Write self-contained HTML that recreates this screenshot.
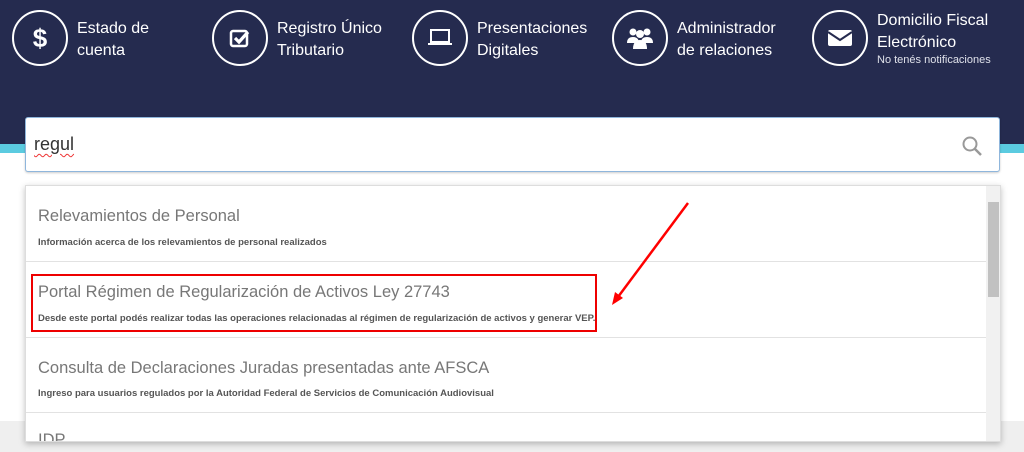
<!DOCTYPE html>
<html><head><meta charset="utf-8"><style>
*{margin:0;padding:0;box-sizing:border-box}
body{width:1024px;height:452px;overflow:hidden;background:#fff;font-family:"Liberation Sans",sans-serif;position:relative}
.hdr{position:absolute;left:0;top:0;width:1024px;height:144px;background:#252b4f}
.cyan{position:absolute;left:0;top:144px;width:1024px;height:9px;background:#5bcbe0}
.grey{position:absolute;left:0;top:421px;width:1024px;height:31px;background:#efefef}
.item{position:absolute;top:10px;color:#fff}
.circ{position:absolute;left:0;top:0;width:56px;height:56px;border:2px solid #fff;border-radius:50%;display:flex;align-items:center;justify-content:center}
.lbl{position:absolute;left:65px;top:8px;font-size:16px;line-height:22px;white-space:nowrap}
.small{font-size:11px;line-height:12px;color:#dfe1ea}
.search{position:absolute;left:25px;top:117px;width:975px;height:55px;background:#fff;border:1px solid #8fb6dc;border-radius:3px;box-shadow:0 1px 2px rgba(0,0,0,.2)}
.search span{position:absolute;left:8px;top:16px;font-size:18px;color:#333;text-decoration:underline wavy #e33;text-decoration-thickness:1px;text-underline-offset:3px}
.dd{position:absolute;left:25px;top:185px;width:976px;height:257px;background:#fff;border:1px solid #ddd;box-shadow:0 2px 6px rgba(0,0,0,.25);overflow:hidden}
.row{position:absolute;left:0;width:960px;border-bottom:1px solid #e2e2e2}
.t{position:absolute;left:12px;font-size:16.5px;color:#777}
.s{position:absolute;left:12px;font-size:9.5px;font-weight:bold;color:#555;white-space:nowrap}
.sb{position:absolute;left:960px;top:0;width:15px;height:257px;background:#f1f1f1}
.th{position:absolute;left:2px;top:16px;width:11px;height:95px;background:#c1c1c1}
</style></head><body>
<div class="hdr"></div><div class="cyan"></div><div class="grey"></div>
<div class="item" style="left:12px"><div class="circ"><span style="font-size:26px;font-weight:bold">$</span></div><div class="lbl">Estado de<br>cuenta</div></div>
<div class="item" style="left:212px"><div class="circ"><svg width="24" height="24" viewBox="0 0 24 24"><rect x="3" y="5" width="16" height="15" rx="2" fill="none" stroke="#fff" stroke-width="2.5"/><path d="M7 12l4 4 9-10" fill="none" stroke="#fff" stroke-width="3.2"/></svg></div><div class="lbl">Registro Único<br>Tributario</div></div>
<div class="item" style="left:412px"><div class="circ"><svg width="26" height="18" viewBox="0 0 26 18"><rect x="4" y="1" width="18" height="12" fill="none" stroke="#fff" stroke-width="2"/><rect x="1" y="14" width="24" height="2" fill="#fff"/></svg></div><div class="lbl">Presentaciones<br>Digitales</div></div>
<div class="item" style="left:612px"><div class="circ"><svg width="28" height="24" viewBox="0 0 28 24"><circle cx="7" cy="6" r="3.5" fill="#fff"/><circle cx="21" cy="6" r="3.5" fill="#fff"/><circle cx="14" cy="8" r="4" fill="#fff"/><path d="M1 17q0-6 6-6 6 0 6 6zM15 17q0-6 6-6 6 0 6 6z" fill="#fff"/><path d="M7 23q0-9 7-9 7 0 7 9z" fill="#fff"/></svg></div><div class="lbl">Administrador<br>de relaciones</div></div>
<div class="item" style="left:812px"><div class="circ"><svg width="26" height="20" viewBox="0 0 26 20"><rect x="1" y="2" width="24" height="16" rx="2" fill="#fff"/><path d="M1 4l12 8 12-8" fill="none" stroke="#252b4f" stroke-width="2"/></svg></div><div class="lbl" style="top:0;line-height:22px">Domicilio Fiscal<br>Electrónico<div class="small">No tenés notificaciones</div></div></div>
<div class="search"><span>regul</span><svg style="position:absolute;right:16px;top:17px" width="22" height="22" viewBox="0 0 22 22"><circle cx="9" cy="9" r="6.5" fill="none" stroke="#999" stroke-width="2"/><path d="M14 14l6 6" stroke="#999" stroke-width="2.5"/></svg></div>
<div class="dd">
<div class="row" style="top:0;height:76px"><div class="t" style="top:21px">Relevamientos de Personal</div><div class="s" style="top:51px">Información acerca de los relevamientos de personal realizados</div></div>
<div class="row" style="top:76px;height:76px"><div class="t" style="top:21px">Portal Régimen de Regularización de Activos Ley 27743</div><div class="s" style="top:51px">Desde este portal podés realizar todas las operaciones relacionadas al régimen de regularización de activos y generar VEP.</div></div>
<div class="row" style="top:152px;height:75px"><div class="t" style="top:21px">Consulta de Declaraciones Juradas presentadas ante AFSCA</div><div class="s" style="top:50px">Ingreso para usuarios regulados por la Autoridad Federal de Servicios de Comunicación Audiovisual</div></div>
<div class="row" style="top:229px;height:40px;border:0"><div class="t" style="top:16px">IDP</div></div>
<div class="sb"><div class="th"></div></div>
</div>
<div style="position:absolute;left:31px;top:274px;width:566px;height:58px;border:2px solid #e00"></div>
<svg style="position:absolute;left:0;top:0" width="1024" height="452"><path d="M688 203L618 297" stroke="#f00" stroke-width="2.5"/><path d="M612 305l3-13 8 6z" fill="#f00"/></svg>
</body></html>
